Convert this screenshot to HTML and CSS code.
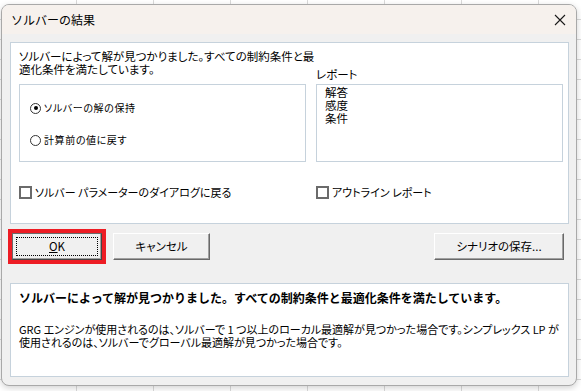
FILE: index.html
```html
<!DOCTYPE html>
<html lang="ja">
<head>
<meta charset="utf-8">
<link rel="stylesheet" href="styles.css">
</head>
<body>
<div class="dialog">
  <div class="titlebar">
    <span class="title">ソルバーの結果</span>
    <svg class="close" width="12" height="12" viewBox="0 0 12 12"><path d="M1 1L11 11M11 1L1 11" stroke="#1a1a1a" stroke-width="1.1" fill="none"/></svg>
  </div>
  <div class="content">
    <div class="panel top">
      <div class="grid">
        <div class="intro">ソルバーによって解が見つかりました。すべての制約条件と最<br>適化条件を満たしています。</div>
        <div class="label">レポート</div>
        <div class="group">
          <div class="radio-row"><span class="radio checked"></span><span>ソルバーの解の保持</span></div>
          <div class="radio-row"><span class="radio"></span><span>計算前の値に戻す</span></div>
        </div>
        <div class="list">
          <div>解答</div>
          <div>感度</div>
          <div>条件</div>
        </div>
        <div class="check-row"><span class="check"></span><span>ソルバー パラメーターのダイアログに戻る</span></div>
        <div class="check-row"><span class="check"></span><span>アウトライン レポート</span></div>
      </div>
    </div>
    <div class="buttons">
      <div class="focus-ring"><button class="btn ok"><span class="focus"><u>O</u>K</span></button></div>
      <button class="btn cancel">キャンセル</button>
      <span class="spacer"></span>
      <button class="btn save">シナリオの保存...</button>
    </div>
    <div class="panel bottom">
      <div class="msg-title">ソルバーによって解が見つかりました。すべての制約条件と最適化条件を満たしています。</div>
      <div class="msg-body">GRG エンジンが使用されるのは、ソルバーで 1 つ以上のローカル最適解が見つかった場合です。シンプレックス LP が<br>使用されるのは、ソルバーでグローバル最適解が見つかった場合です。</div>
    </div>
  </div>
</div>
</body>
</html>
```

FILE: styles.css
```css
html, body {
  margin: 0;
  padding: 0;
}
body {
  width: 581px;
  height: 391px;
  overflow: hidden;
  background-color: #ffffff;
  background-image:
    repeating-linear-gradient(to right, transparent 0, transparent 76px, #dadada 76px, #dadada 77px),
    repeating-linear-gradient(to bottom, transparent 0, transparent 19px, #dadada 19px, #dadada 20px);
  font-family: "Noto Sans CJK JP", "Noto Sans", sans-serif;
  color: #000;
}
.dialog {
  margin: 4px 0 0 1px;
  width: 574px;
  height: 380px;
  border: 1px solid #a9a9a9;
  border-radius: 8px;
  background: #f0f0f0;
  overflow: hidden;
  box-shadow: 0 2px 6px rgba(0,0,0,0.18);
}
.titlebar {
  height: 29px;
  background: #f6f1ed;
  display: flex;
  align-items: center;
  justify-content: space-between;
  padding: 0 10px 0 9px;
}
.title {
  font-size: 12px;
  line-height: 14px;
}
.close {
  display: block;
}
.content {
  padding: 8px 7px 0 8px;
  font-feature-settings: "palt";
}
.panel {
  background: #fff;
  border: 1px solid #c6d2dc;
}
.panel.top {
  height: 180px;
  padding: 0 5px 0 8px;
}
.grid {
  display: grid;
  grid-template-columns: 287px 247px;
  grid-template-rows: 41px 78px auto;
  column-gap: 10px;
}
.intro {
  font-size: 11.5px;
  line-height: 12.5px;
  white-space: nowrap;
  padding-top: 7px;
}
.label {
  align-self: end;
  font-size: 11.5px;
  line-height: 13px;
  padding-bottom: 3px;
}
.group {
  border: 1px solid #c6d2dc;
  padding: 16px 0 0 10px;
  display: flex;
  flex-direction: column;
  gap: 18px;
}
.radio-row {
  display: flex;
  align-items: center;
  gap: 3px;
  font-size: 10px;
  line-height: 14px;
  letter-spacing: 0.6px;
}
.radio {
  width: 9px;
  height: 9px;
  border: 1px solid #333;
  border-radius: 50%;
  background: #fff;
  position: relative;
  box-sizing: content-box;
}
.radio.checked::after {
  content: "";
  position: absolute;
  left: 2.5px;
  top: 2.5px;
  width: 4px;
  height: 4px;
  border-radius: 50%;
  background: #000;
}
.list {
  border: 1px solid #c6d2dc;
  padding: 1px 0 0 8px;
  font-size: 11.5px;
  line-height: 13px;
}
.check-row {
  margin-top: 23px;
  display: flex;
  align-items: center;
  gap: 3px;
  font-size: 11px;
  line-height: 14px;
  white-space: nowrap;
}
.check {
  width: 9px;
  height: 9px;
  border: 2px solid #6b6b6b;
  background: #fff;
  flex: none;
}
.buttons {
  display: flex;
  align-items: center;
  height: 36px;
  margin: 4px 0 0 -2px;
  padding-right: 5px;
}
.focus-ring {
  border: 4px solid #ed1c24;
  display: flex;
}
.btn {
  font-family: "Noto Sans CJK JP", "Noto Sans", sans-serif;
  font-feature-settings: "palt";
  font-size: 11.5px;
  line-height: 14px;
  height: 27px;
  background: #f0f0f0;
  border: 1px solid;
  border-color: #ffffff #696969 #696969 #ffffff;
  box-shadow: inset -1px -1px 0 #a0a0a0;
  padding: 0;
  color: #000;
  display: flex;
  align-items: center;
  justify-content: center;
}
.btn.ok {
  width: 90px;
  border-color: #696969 #444 #444 #696969;
  padding: 3px;
}
.focus {
  flex: 1;
  align-self: stretch;
  border: 1px dotted #000;
  display: flex;
  align-items: center;
  justify-content: center;
}
.btn.cancel {
  width: 97px;
  margin-left: 7px;
}
.spacer {
  flex: 1;
}
.btn.save {
  width: 130px;
}
.panel.bottom {
  margin-top: 19px;
  height: 92px;
  padding: 0 8px;
}
.msg-title {
  font-size: 12px;
  font-weight: bold;
  line-height: 16px;
  padding-top: 6px;
  white-space: nowrap;
  font-feature-settings: normal;
}
.msg-body {
  margin-top: 17px;
  font-size: 11px;
  line-height: 12.5px;
  white-space: nowrap;
}
```
